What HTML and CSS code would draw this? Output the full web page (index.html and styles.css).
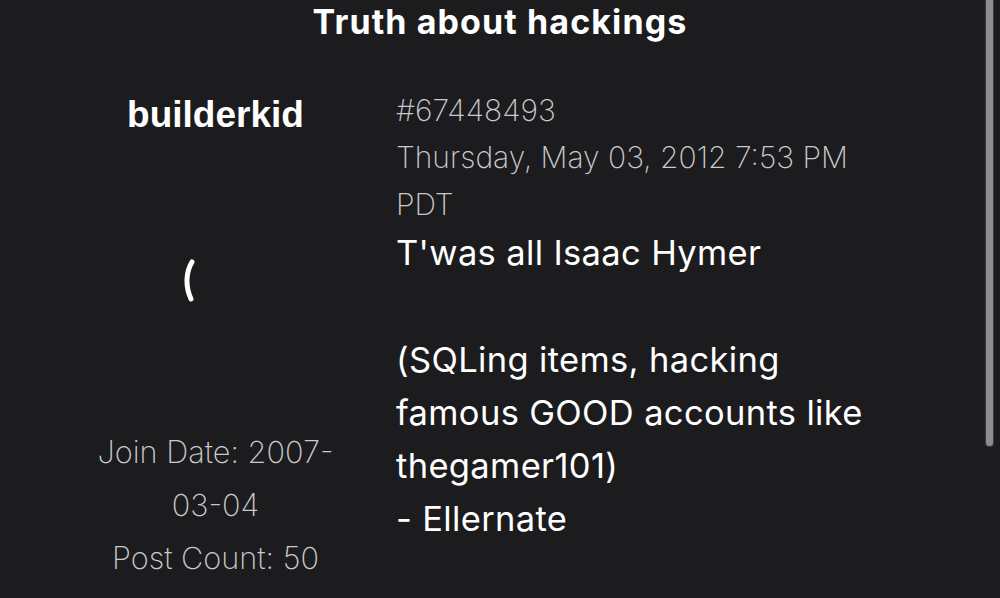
FILE: index.html
```html
<!DOCTYPE html>
<html lang="en">
<head>
<meta charset="utf-8">
<title>Truth about hackings</title>
<link rel="stylesheet" href="styles.css">
</head>
<body>
<h1 class="title">Truth about hackings</h1>
<div class="post">
  <div class="author">
    <div class="name">builderkid</div>
    <div class="avatar">
      <svg width="20" height="44" viewBox="0 0 20 44" aria-hidden="true">
        <path d="M11 3 C 5 13, 4 27, 10 40" fill="none" stroke="#ffffff" stroke-width="5" stroke-linecap="round"/>
      </svg>
    </div>
    <div class="stats">
      <p>Join Date: 2007-03-04</p>
      <p>Post Count: 50</p>
    </div>
  </div>
  <div class="content">
    <div class="meta">
      <p>#67448493</p>
      <p>Thursday, May 03, 2012 7:53 PM PDT</p>
    </div>
    <div class="body">T'was all Isaac Hymer<br><br>(SQLing items, hacking famous GOOD accounts like thegamer101)<br>- Ellernate</div>
  </div>
</div>
<div class="scrollbar"></div>
</body>
</html>
```

FILE: styles.css
```css
html, body {
  margin: 0;
  padding: 0;
  background: #1c1c1e;
  overflow: hidden;
  height: 100%;
}
body {
  font-family: Inter, "Noto Sans", sans-serif;
  color: #ffffff;
}
p { margin: 0; }
.title {
  margin: 0;
  font-size: 34px;
  line-height: 44px;
  font-weight: 700;
  letter-spacing: 1.1px;
  text-align: center;
  color: #ffffff;
}
.post {
  display: flex;
  margin-top: 43px;
  padding-left: 90px;
  gap: 55px;
}
.author {
  width: 251px;
  flex: none;
  display: flex;
  flex-direction: column;
  align-items: center;
  text-align: center;
  padding-top: 9px;
}
.name {
  font-family: "Liberation Sans", Arial, sans-serif;
  font-weight: 700;
  font-size: 37px;
  line-height: 37px;
}
.avatar {
  height: 292px;
  display: flex;
  align-items: center;
  justify-content: center;
  margin-right: 50px;
}
.avatar svg { display: block; margin-top: 4px; }
.stats {
  font-size: 30.7px;
  line-height: 53px;
  font-weight: 250;
  color: #cacace;
}
.content {
  width: 485px;
  flex: none;
}
.meta {
  font-size: 30px;
  line-height: 47px;
  font-weight: 250;
  letter-spacing: 0px;
  color: #cacace;
}
.body {
  font-size: 34.5px;
  line-height: 53.3px;
  font-weight: 400;
  letter-spacing: 0.35px;
  color: #ffffff;
  margin-top: -2px;
}
.scrollbar {
  position: fixed;
  top: -6px;
  left: 985px;
  width: 7px;
  height: 451px;
  border-radius: 4px;
  background: #8e8e90;
  border: 1px solid #3a3a3c;
}
```
